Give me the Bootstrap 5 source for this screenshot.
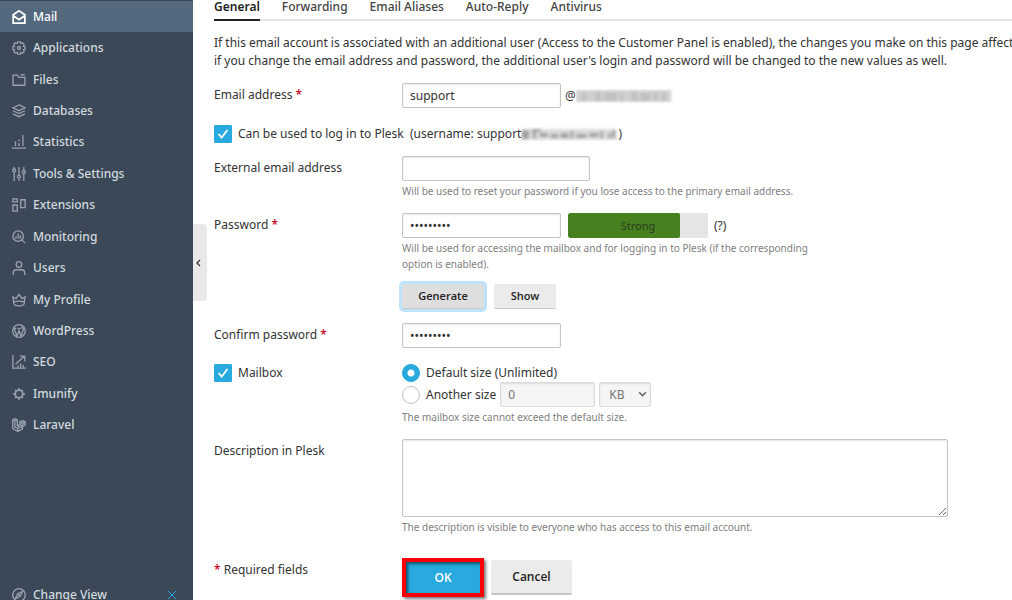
<!DOCTYPE html>
<html lang="en">
<head>
<meta charset="utf-8">
<meta name="viewport" content="width=device-width, initial-scale=1">
<title>Mail account - Plesk</title>
<link href="https://cdn.jsdelivr.net/npm/bootstrap@5.3.0/dist/css/bootstrap.min.css" rel="stylesheet">
<style>
  body { font: 400 12px/18px "Noto Sans", "Open Sans", sans-serif; color: #333; }
  .shell { height: 100vh; }

  /* Sidebar */
  .side { width: 193px; height: calc(100vh + 10px); background: #3a4858; }
  .side-list { min-height: 440px; grid-auto-rows: 1fr; margin-top: 1px; }
  .side-link { padding: 0 12px; gap: 7px; color: #d4dade; font-weight: 500; text-decoration: none; }
  .side-link svg { width: 14px; height: 14px; flex: none; fill: none; stroke: #98a3ae; stroke-width: 1.5; }
  .side-link.active { background: #54697d; color: #fff; }
  .side-link.active svg { stroke: #fff; stroke-width: 2; }
  .side-foot { height: 31px; }
  .side-foot .close-x { width: 8px; height: 8px; margin-right: 17px; stroke: #28aade; }
  .collapse-btn { left: 193px; top: 224px; width: 14px; height: 77px; padding: 0 0 0 3px; background: #e9e9e9; border-radius: 0 4px 4px 0; }

  /* Main area */
  .content-pane { padding-left: 21px; min-width: 0; }
  .tab-row { gap: 22px; border-bottom: 2px solid #e6e6e6; }
  .tab-link { color: #444; font-weight: 500; line-height: 14px; padding-bottom: 5px; margin-bottom: -2px; border-bottom: 2px solid transparent; text-decoration: none; }
  .tab-link.active { color: #222; font-weight: 600; border-color: #222; }
  .intro { margin: 13px 0; }
  .line-a { margin-top: 13px; }
  .line-b { margin-top: 14px; }
  .line-c { margin-top: 17px; }
  .line-d { margin-top: 23px; }
  .form-line { display: grid; grid-template-columns: 188px minmax(0, 1fr); align-items: start; }
  .line-label { padding-top: 3px; }
  .req { color: #c8102e; font-weight: 600; }
  .box { height: 25px; padding: 0 7px; font-size: 12px; line-height: 18px; color: #333; border: 1px solid #c4c4c4; border-radius: 2px; box-shadow: inset 0 1px 2px #0000001a; }
  .box:disabled { background-color: #f5f5f5; color: #777; border-color: #dcdcdc; opacity: 1; }
  .w-std { width: 159px; margin-right: 4px; }
  .w-wide { width: 188px; }
  .w-size { width: 95px; }
  select.box { width: 52px; padding: 0 9px; appearance: none; background: url("data:image/svg+xml,%3Csvg xmlns='http://www.w3.org/2000/svg' viewBox='0 0 8 6'%3E%3Cpath d='M1 1l3 3 3-3' fill='none' stroke='%23666' stroke-width='1.4'/%3E%3C/svg%3E") no-repeat right 3px center / 9px 7px; }
  .hint { color: #808080; font-size: 10px; line-height: 16px; margin-top: 2px; }
  .hint-narrow { max-width: 430px; }
  .area { width: 546px; max-width: 100%; height: 78px; display: block; resize: both; }
  .tick { width: 18px; height: 18px; margin: 0 6px 0 0; flex: none; border-color: #c4c4c4; }
  .tick[type=checkbox] { border-radius: 1px; }
  .tick:checked { background-color: #28aade; border-color: #28aade; }
  .tick[type=checkbox]:checked { background-image: url("data:image/svg+xml,%3Csvg xmlns='http://www.w3.org/2000/svg' viewBox='0 0 18 18'%3E%3Cpath d='M4 9l3.500 4L14 4.500' fill='none' stroke='white' stroke-width='2'/%3E%3C/svg%3E"); }
  .tick[type=radio]:checked { background-image: radial-gradient(circle, #fff 3px, #28aade 4px); }
  .masked { width: 97px; height: 14px; }

  .meter { width: 140px; height: 25px; margin: 0 6px 0 3px; font-size: 11px; background: #e5e5e5; border-radius: 2px; }
  .meter-fill { background: #47801e; border-radius: 2px; }
  .meter-text { color: #2c3b22; }

  .act { border: 0; border-bottom: 1px solid #c4c4c4; border-radius: 2px; background: #ebebeb; color: #222; font-family: "Open Sans", sans-serif; font-weight: 600; padding: 0; }
  .act-sm { height: 25px; font-size: 11px; width: 62px; }
  .act-gen { width: 82px; background: #dedede; box-shadow: 0 0 0 3px #bfe3fb; margin-right: 10px; }
  .act-row { margin-top: 12px; }
  .act-lg { height: 35px; width: 81px; font-size: 12px; border-bottom-width: 2px; }
  .act-ok { width: 82px; height: 39px; margin-right: 7px; background: #28aade; color: #fff; border: 4px solid #f80008; border-radius: 0; box-shadow: 2px 2px 3px #0008, inset 2px 2px 3px #0008; }
</style>
</head>
<body>
<div class="shell d-flex overflow-hidden position-relative">

  <aside class="side d-flex flex-column flex-shrink-0">
    <nav class="side-list d-grid" aria-label="Main">
      <a class="side-link active d-flex align-items-center" href="#"><svg viewBox="0 0 16 16"><path d="M1.300 5.500 8 1l6.700 4.500V15H1.300zM1.500 6.500 8 11l6.500-4.500"/></svg>Mail</a>
      <a class="side-link d-flex align-items-center" href="#"><svg viewBox="0 0 16 16"><path d="M6.500 1h3l.5 2 2-1 2 2-1 2 2 .5v3l-2 .5 1 2-2 2-2-1-.5 2h-3L6 13l-2 1-2-2 1-2-2-.5v-3L3 6 2 4l2-2 2 1z"/><circle cx="8" cy="8" r="1.700"/></svg>Applications</a>
      <a class="side-link d-flex align-items-center" href="#"><svg viewBox="0 0 16 16"><path d="M1.200 2.500H6L8 5h6.800v9H1.200zM9.500 2.200h5.300"/></svg>Files</a>
      <a class="side-link d-flex align-items-center" href="#"><svg viewBox="0 0 16 16"><path d="M8 1l7 3.300-7 3.300-7-3.300zM1 7.700 8 11l7-3.300M1 11.200l7 3.300 7-3.300"/></svg>Databases</a>
      <a class="side-link d-flex align-items-center" href="#"><svg viewBox="0 0 16 16"><path d="M0 15h16M4 7v5.500M8 9v3.500M8 5v2M12.500 0v12.500"/></svg>Statistics</a>
      <a class="side-link d-flex align-items-center" href="#"><svg viewBox="0 0 16 16"><path d="M2.500 0v2M2.500 6v10M8 0v9M8 13v3M13.500 0v4M13.500 8v8"/><circle cx="2.500" cy="4" r="1.700"/><circle cx="8" cy="11" r="1.700"/><circle cx="13.500" cy="6" r="1.700"/></svg>Tools &amp; Settings</a>
      <a class="side-link d-flex align-items-center" href="#"><svg viewBox="0 0 16 16"><path d="M1 1h5v3.500H1zM1 8h5v7H1zM10 2h5v9h-5z"/></svg>Extensions</a>
      <a class="side-link d-flex align-items-center" href="#"><svg viewBox="0 0 16 16"><circle cx="7" cy="7" r="6"/><path d="M11.300 11.300 15 15M4.500 7v3M7 4v6M9.500 6v4"/></svg>Monitoring</a>
      <a class="side-link d-flex align-items-center" href="#"><svg viewBox="0 0 16 16"><circle cx="8" cy="4" r="3.200"/><path d="M1.500 16v-2.500q0-3.500 3.500-3.500h6q3.500 0 3.500 3.500V16"/></svg>Users</a>
      <a class="side-link d-flex align-items-center" href="#"><svg viewBox="0 0 16 16"><path d="M2 10 1 4.500 4.500 6.500 8 1.500l3.500 5L15 4.500 14 10q1 4.700-6 4.700T2 10zM2 10.500q6-2.500 12 0"/></svg>My Profile</a>
      <a class="side-link d-flex align-items-center" href="#"><svg viewBox="0 0 16 16"><circle cx="8" cy="8" r="7.200"/><path d="M2.500 5l3.200 9L8 7.500 10.300 14 13 6q-1.500-2-2-3M2 5h3M6.500 5H10"/></svg>WordPress</a>
      <a class="side-link d-flex align-items-center" href="#"><svg viewBox="0 0 16 16"><path d="M1 0v15h15M4 10.500l10-9M9 1.200h5.500V7M7 12v2M10 9.500V14M13 11.500V14"/></svg>SEO</a>
      <a class="side-link d-flex align-items-center" href="#"><svg viewBox="0 0 16 16"><circle cx="8" cy="8" r="4.300" stroke-width="2"/><path d="M8 1v3M8 12v3M1 8h3M12 8h3M3.300 3.300l1.800 1.800M10.900 10.900l1.800 1.800M3.300 12.700l1.800-1.800M10.900 5.100l1.800-1.800"/></svg>Imunify</a>
      <a class="side-link d-flex align-items-center" href="#"><svg viewBox="0 0 16 16" stroke-linejoin="round"><path d="M.8 2 3.300.8 6 2v7l3-1.700V4.500L12.200 3l3 1.500v3.300L12 9.500v3L6.500 15.400.8 12zM.8 2l2.500 1.400L6 2M3.300 3.400v7L6.500 12 12 9.500M6 9l3 1.500M9 4.500l3.200 1.700 3-1.700M12.200 6.200v3.300L9 7.500M6.500 12v3.400"/></svg>Laravel</a>
    </nav>
    <div class="side-foot d-flex align-items-center justify-content-between mt-auto">
      <a class="side-link d-flex align-items-center" href="#"><svg viewBox="0 0 16 16"><circle cx="8" cy="8" r="7.200"/><path d="M12 4 9.500 9.500 4 12l2.500-5.500zM6.500 6.500l3 3"/></svg>Change View</a>
      <svg class="close-x" viewBox="0 0 8 8"><path d="M0 0l8 8M8 0 0 8"/></svg>
    </div>
  </aside>

  <button type="button" class="collapse-btn position-absolute border-0 d-flex align-items-center" aria-label="Collapse sidebar">
    <svg width="5" height="8" viewBox="0 0 5 8" fill="none" stroke="#333" stroke-width="1.300"><path d="M4 1 1 4l3 3"/></svg>
  </button>

  <main class="content-pane flex-grow-1 overflow-hidden">
    <nav class="tab-row d-flex" aria-label="Account sections">
      <a class="tab-link active" href="#">General</a>
      <a class="tab-link" href="#">Forwarding</a>
      <a class="tab-link" href="#">Email Aliases</a>
      <a class="tab-link" href="#">Auto-Reply</a>
      <a class="tab-link" href="#">Antivirus</a>
    </nav>

    <p class="intro text-nowrap">If this email account is associated with an additional user (Access to the Customer Panel is enabled), the changes you make on this page affect<br>if you change the email address and password, the additional user's login and password will be changed to the new values as well.</p>

    <form>
      <div class="form-line">
        <label class="line-label" for="email">Email address <span class="req">*</span></label>
        <div class="d-flex align-items-center">
          <input class="box w-std" id="email" type="text" value="support">
          <span>@</span>
          <svg class="masked" viewBox="0 0 98 14" aria-hidden="true"><defs><filter id="soft"><feGaussianBlur stdDeviation="1.500"/></filter></defs><g filter="url(#soft)"><path fill="#d0d0d0" d="M0 1h96v12H0z"/><path fill="#c0c0c0" d="M6 4h4v8H6zM20 3h5v9h-5zM29 4h12v8H29zM45 4h3v8h-3zM56 3h6v9h-6zM65 4h10v8H65zM79 4h3v8h-3zM87 4h4v8h-4z"/></g></svg>
        </div>
      </div>

      <div class="d-flex align-items-center line-c">
        <input class="form-check-input tick" type="checkbox" id="login" checked>
        <label class="text-nowrap" for="login">Can be used to log in to Plesk &nbsp;(username: support</label>
        <svg class="masked" viewBox="0 0 98 14" aria-hidden="true"><g filter="url(#soft)"><path fill="#dcdcdc" d="M0 2h97v11H0z"/><path fill="#a0a0a0" d="M1 3h7v9H1zM11 2h9v3h-9zM12 5h3v7h-3zM19 6h8v4h-8zM30 7h7v4h-7zM40 6h8v5h-8zM50 4h3v7h-3zM56 7h10v4H56zM69 6h9v4h-9zM80 4h3v7h-3zM88 6h3v5h-3zM92 3h3v8h-3z"/></g></svg>
        <span>)</span>
      </div>

      <div class="form-line line-a">
        <label class="line-label" for="external">External email address</label>
        <div>
          <input class="box w-wide d-block" id="external" type="text">
          <div class="hint">Will be used to reset your password if you lose access to the primary email address.</div>
        </div>
      </div>

      <div class="form-line line-b">
        <label class="line-label" for="pass">Password <span class="req">*</span></label>
        <div>
          <div class="d-flex align-items-center">
            <input class="box w-std" id="pass" type="password" value="plesk1234">
            <div class="meter position-relative overflow-hidden">
              <div class="meter-fill h-100" style="width:80%"></div>
              <span class="meter-text position-absolute top-0 start-0 w-100 h-100 d-flex align-items-center justify-content-center">Strong</span>
            </div>
            <span>(?)</span>
          </div>
          <div class="hint hint-narrow">Will be used for accessing the mailbox and for logging in to Plesk (if the corresponding option is enabled).</div>
          <div class="d-flex act-row">
            <button type="button" class="act act-sm act-gen">Generate</button>
            <button type="button" class="act act-sm">Show</button>
          </div>
        </div>
      </div>

      <div class="form-line line-b">
        <label class="line-label" for="confirm">Confirm password <span class="req">*</span></label>
        <input class="box w-std" id="confirm" type="password" value="plesk1234">
      </div>

      <div class="form-line mt-3">
        <div class="d-flex align-items-center">
          <input class="form-check-input tick" type="checkbox" id="mailbox" checked>
          <label for="mailbox">Mailbox</label>
        </div>
        <div>
          <div class="d-flex align-items-center">
            <input class="form-check-input tick" type="radio" name="size" id="size-default" checked>
            <label for="size-default">Default size (Unlimited)</label>
          </div>
          <div class="d-flex align-items-center">
            <input class="form-check-input tick" type="radio" name="size" id="size-other">
            <label class="me-1" for="size-other">Another size</label>
            <input class="box w-size" type="text" value="0" aria-label="Mailbox size" disabled>
            <select class="box ms-1" aria-label="Size unit" disabled><option>KB</option></select>
          </div>
          <div class="hint">The mailbox size cannot exceed the default size.</div>
        </div>
      </div>

      <div class="form-line line-b">
        <label class="line-label" for="desc">Description in Plesk</label>
        <div>
          <textarea class="box area" id="desc"></textarea>
          <div class="hint">The description is visible to everyone who has access to this email account.</div>
        </div>
      </div>

      <div class="form-line line-d">
        <div class="line-label"><span class="req">*</span> Required fields</div>
        <div class="d-flex align-items-center">
          <button type="submit" class="act act-lg act-ok">OK</button>
          <button type="button" class="act act-lg">Cancel</button>
        </div>
      </div>
    </form>
  </main>
</div>
<script src="https://cdn.jsdelivr.net/npm/bootstrap@5.3.0/dist/js/bootstrap.bundle.min.js"></script>
</body>
</html>
